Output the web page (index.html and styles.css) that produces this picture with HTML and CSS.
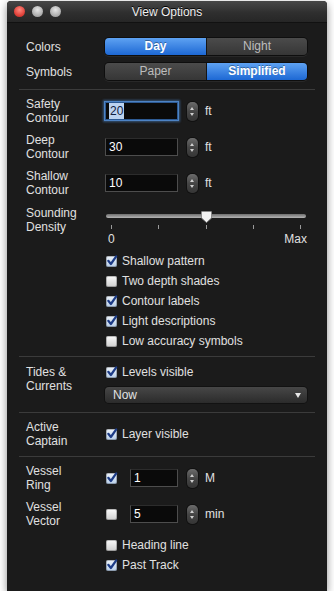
FILE: index.html
```html
<!DOCTYPE html>
<html lang="en">
<head>
    <meta charset="UTF-8">
    <meta name="viewport" content="width=device-width, initial-scale=1.0">
    <title>View Options</title>
    <link rel="stylesheet" href="styles.css">
</head>
<body>
    <div class="window">
        <header class="titlebar">
            <div class="lights">
                <span class="light light-close"></span>
                <span class="light"></span>
                <span class="light"></span>
            </div>
            <div class="title">View Options</div>
            <div></div>
        </header>

        <!-- Display -->
        <section class="group group-display">
            <div class="row">
                <span class="label">Colors</span>
                <div class="seg">
                    <span class="seg-item on">Day</span>
                    <span class="seg-item">Night</span>
                </div>
            </div>
            <div class="row">
                <span class="label">Symbols</span>
                <div class="seg">
                    <span class="seg-item">Paper</span>
                    <span class="seg-item on">Simplified</span>
                </div>
            </div>
        </section>

        <!-- Depths -->
        <section class="group group-depth">
            <div class="row row-tall">
                <span class="label">Safety<br>Contour</span>
                <div class="spin">
                    <div class="field focus"><span class="sel">20</span></div>
                    <span class="stepper"></span>
                    <span class="unit">ft</span>
                </div>
            </div>
            <div class="row row-tall">
                <span class="label">Deep<br>Contour</span>
                <div class="spin">
                    <div class="field">30</div>
                    <span class="stepper"></span>
                    <span class="unit">ft</span>
                </div>
            </div>
            <div class="row row-tall">
                <span class="label">Shallow<br>Contour</span>
                <div class="spin">
                    <div class="field">10</div>
                    <span class="stepper"></span>
                    <span class="unit">ft</span>
                </div>
            </div>
            <div class="row row-slider">
                <span class="label">Sounding<br>Density</span>
                <div class="slider">
                    <div class="track">
                        <svg class="thumb" width="11" height="12" viewBox="0 0 11 12">
                            <path d="M1 .5 H10 Q10.5 .5 10.5 1 V7 L5.5 11.5 L.5 7 V1 Q.5 .5 1 .5 Z" fill="#f4f4f4" stroke="#8a8a8a" stroke-width="1"/>
                        </svg>
                    </div>
                    <div class="ticks"><i></i><i></i><i></i><i></i><i></i></div>
                    <div class="scale"><span>0</span><span>Max</span></div>
                </div>
            </div>
            <div class="row">
                <span></span>
                <div class="checks">
                    <label class="check"><span class="box on"><svg viewBox="0 0 12 12"><path d="M2.3 5.8 L4.9 9 L10.2 1.4"/></svg></span>Shallow pattern</label>
                    <label class="check"><span class="box"></span>Two depth shades</label>
                    <label class="check"><span class="box on"><svg viewBox="0 0 12 12"><path d="M2.3 5.8 L4.9 9 L10.2 1.4"/></svg></span>Contour labels</label>
                    <label class="check"><span class="box on"><svg viewBox="0 0 12 12"><path d="M2.3 5.8 L4.9 9 L10.2 1.4"/></svg></span>Light descriptions</label>
                    <label class="check"><span class="box"></span>Low accuracy symbols</label>
                </div>
            </div>
        </section>

        <!-- Tides -->
        <section class="group group-tides">
            <div class="row row-top">
                <span class="label">Tides &amp;<br>Currents</span>
                <div>
                    <label class="check check-line"><span class="box on"><svg viewBox="0 0 12 12"><path d="M2.3 5.8 L4.9 9 L10.2 1.4"/></svg></span>Levels visible</label>
                    <div class="select">Now</div>
                </div>
            </div>
        </section>

        <!-- Active Captain -->
        <section class="group group-captain">
            <div class="row row-tall">
                <span class="label">Active<br>Captain</span>
                <label class="check check-line"><span class="box on"><svg viewBox="0 0 12 12"><path d="M2.3 5.8 L4.9 9 L10.2 1.4"/></svg></span>Layer visible</label>
            </div>
        </section>

        <!-- Vessel -->
        <section class="group group-vessel">
            <div class="row row-tall">
                <span class="label">Vessel<br>Ring</span>
                <div class="spin">
                    <span class="box on"><svg viewBox="0 0 12 12"><path d="M2.3 5.8 L4.9 9 L10.2 1.4"/></svg></span>
                    <div class="field field-short">1</div>
                    <span class="stepper"></span>
                    <span class="unit">M</span>
                </div>
            </div>
            <div class="row row-tall">
                <span class="label">Vessel<br>Vector</span>
                <div class="spin">
                    <span class="box"></span>
                    <div class="field field-short">5</div>
                    <span class="stepper"></span>
                    <span class="unit">min</span>
                </div>
            </div>
            <div class="row row-after">
                <span></span>
                <div class="checks">
                    <label class="check"><span class="box"></span>Heading line</label>
                    <label class="check"><span class="box on"><svg viewBox="0 0 12 12"><path d="M2.3 5.8 L4.9 9 L10.2 1.4"/></svg></span>Past Track</label>
                </div>
            </div>
        </section>
    </div>
</body>
</html>
```

FILE: styles.css
```css
/* Base */
:root {
    --win-bg: #1b1b1b;
    --line: #3b3b3b;
    --text: #e0e0e0;
    --blue-top: #5ea2f2;
    --blue-bottom: #1d68d4;
}
body {
    margin: 0;
    padding: 1px 7px 0;
    background: #fff;
    font-family: 'Liberation Sans', Arial, sans-serif;
    font-size: 12px;
    color: var(--text);
}

/* Window */
.window {
    width: 320px;
    background: var(--win-bg);
    border-radius: 4px 4px 0 0;
    box-shadow: 0 3px 9px rgba(0, 0, 0, 0.45);
}
.titlebar {
    display: grid;
    grid-template-columns: 1fr auto 1fr;
    align-items: center;
    height: 21px;
    border-radius: 4px 4px 0 0;
    background: linear-gradient(#474747, #2f2f2f 55%, #262626);
    border-bottom: 1px solid #111;
}
.lights {
    display: flex;
    gap: 7px;
    padding-left: 7px;
}
.light {
    width: 11px;
    height: 11px;
    border-radius: 50%;
    background: radial-gradient(circle at 50% 35%, #e6e6e6, #a9a9a9 70%, #8c8c8c);
}
.light-close {
    background: radial-gradient(circle at 50% 35%, #ff8a80, #e2443c 60%, #b3241e);
}
.title {
    color: #f0f0f0;
    font-size: 12px;
    text-shadow: 0 -1px 0 #000;
}

/* Groups */
.group {
    display: flex;
    flex-direction: column;
    margin: 0 12px;
    padding: 0 8px 0 7px;
    border-top: 1px solid var(--line);
}
.group-display { border-top: none; padding-top: 15px; padding-bottom: 9px; gap: 8px; }
.group-depth { padding-top: 7px; padding-bottom: 5px; gap: 8px; }
.group-tides { padding-top: 8px; padding-bottom: 9px; }
.group-captain { padding-top: 7px; padding-bottom: 8px; }
.group-vessel { padding-top: 7px; padding-bottom: 16px; gap: 8px; }

.row {
    display: grid;
    grid-template-columns: 79px 1fr;
    align-items: center;
}
.row-tall { min-height: 28px; }
.row-top { align-items: start; }
.row-slider { align-items: start; margin-top: 1px; }
.group-depth .checks { margin-top: -3px; }
.row-after { margin-top: -1px; }
.label { line-height: 14px; }

/* Segmented control */
.seg {
    display: grid;
    grid-template-columns: 1fr 1fr;
    height: 17px;
    border-radius: 4px;
    overflow: hidden;
    box-shadow: 0 0 0 1px #0e0e0e, 0 1px 0 1px rgba(255, 255, 255, 0.06);
}
.seg-item {
    text-align: center;
    line-height: 17px;
    color: #bdbdbd;
    background: linear-gradient(#4b4b4b, #363636);
}
.seg-item + .seg-item { border-left: 1px solid #151515; }
.seg-item.on {
    color: #fff;
    font-weight: bold;
    background: linear-gradient(var(--blue-top), var(--blue-bottom));
    text-shadow: 0 -1px 0 rgba(0, 0, 0, 0.35);
}

/* Number fields */
.spin {
    display: flex;
    align-items: center;
}
.field {
    box-sizing: border-box;
    width: 73px;
    height: 18px;
    padding-left: 3px;
    border: 1px solid #4d4d4d;
    border-top-color: #2c2c2c;
    background: #0a0a0a;
    color: #fff;
    line-height: 16px;
}
.field-short { width: 48px; margin-left: 13px; }
.field.focus {
    border-color: #2d5a93;
    box-shadow: 0 0 0 1px #4d83c4, 0 0 2px 2px rgba(77, 131, 196, 0.55);
}
.sel {
    display: inline-block;
    background: #bcd3f0;
    color: #102040;
    padding: 0 1px;
}
.stepper {
    position: relative;
    width: 11px;
    height: 19px;
    margin-left: 9px;
    border-radius: 5px;
    background: linear-gradient(#6c6c6c, #454545 50%, #353535);
    box-shadow: 0 0 0 1px #111;
}
.stepper::before, .stepper::after {
    content: '';
    position: absolute;
    left: 3px;
    border-left: 2.5px solid transparent;
    border-right: 2.5px solid transparent;
}
.stepper::before { top: 5px; border-bottom: 3px solid #cfcfcf; }
.stepper::after { bottom: 5px; border-top: 3px solid #cfcfcf; }
.unit { margin-left: 7px; }

/* Slider */
.track {
    position: relative;
    height: 4px;
    margin: 8px 1px 0;
    border-radius: 2px;
    background: linear-gradient(#6e6e6e, #b4b4b4);
}
.thumb {
    position: absolute;
    left: 95px;
    top: -3px;
}
.ticks {
    display: flex;
    justify-content: space-between;
    height: 4px;
    margin-top: 7px;
    padding: 0 6px;
}
.ticks i { width: 1px; background: #9a9a9a; }
.scale {
    display: flex;
    justify-content: space-between;
    margin-top: 3px;
    padding-left: 3px;
    line-height: 14px;
}

/* Checkboxes */
.checks { display: flex; flex-direction: column; }
.check {
    display: flex;
    align-items: center;
    gap: 5px;
    height: 20px;
}
.check-line { height: 14px; }
.group-tides .select { margin-top: 8px; }
.box {
    position: relative;
    flex: none;
    width: 11px;
    height: 11px;
    margin-left: 1px;
    border-radius: 2px;
    background: linear-gradient(#fbfbfb, #cfcfcf);
    box-shadow: inset 0 0 0 1px rgba(0, 0, 0, 0.25);
}
.box.on { background: linear-gradient(#eef4fb, #b9cfe9); }
.box svg {
    position: absolute;
    left: 0;
    top: -1px;
    width: 12px;
    height: 12px;
    overflow: visible;
}
.box svg path {
    fill: none;
    stroke: #1c3b86;
    stroke-width: 2.2;
    stroke-linecap: round;
    stroke-linejoin: round;
}

/* Popup */
.select {
    position: relative;
    height: 16px;
    padding-left: 8px;
    border-radius: 4px;
    line-height: 16px;
    color: #e2e2e2;
    background: linear-gradient(#474747, #2b2b2b);
    box-shadow: 0 0 0 1px #121212;
}
.select::after {
    content: '';
    position: absolute;
    right: 6px;
    top: 6px;
    border-left: 3.5px solid transparent;
    border-right: 3.5px solid transparent;
    border-top: 5px solid #e6e6e6;
}
```
